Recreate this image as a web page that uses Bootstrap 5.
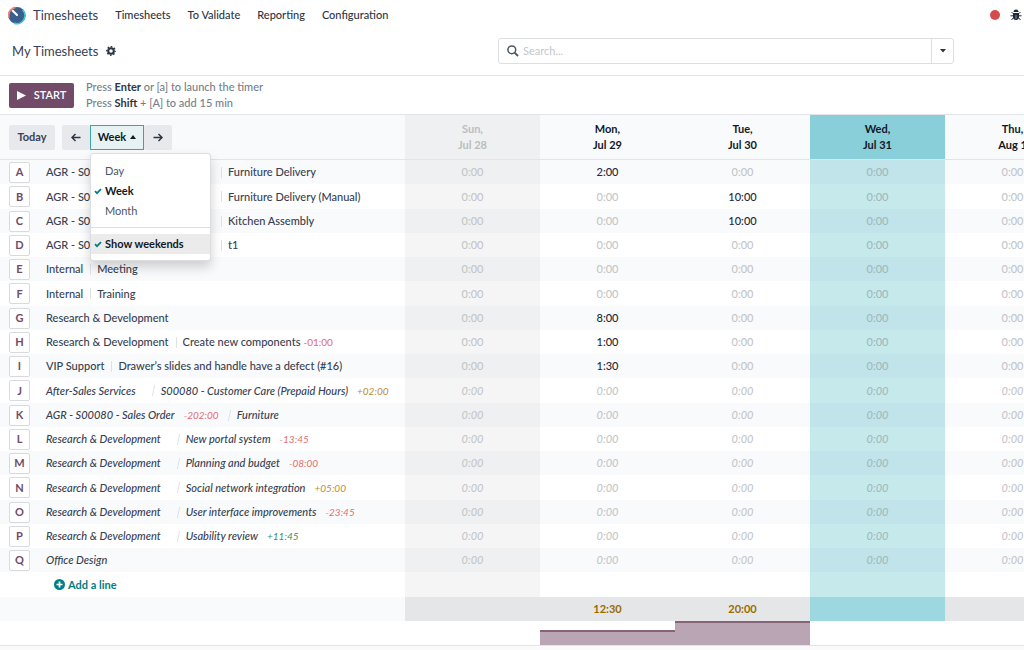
<!DOCTYPE html>
<html lang="en">
<head>
<meta charset="utf-8">
<meta name="viewport" content="width=device-width, initial-scale=1">
<title>My Timesheets</title>
<link href="https://cdn.jsdelivr.net/npm/bootstrap@5.3.0/dist/css/bootstrap.min.css" rel="stylesheet">
<script src="https://cdn.jsdelivr.net/npm/bootstrap@5.3.0/dist/js/bootstrap.bundle.min.js" defer></script>
<style>
  :root { --plum: #714b67; --teal: #017e84; --ink: #374151; --rule: #e3e4e6; --font: Lato, "Noto Sans", sans-serif; }
  body { font: 500 11px/16px var(--font); color: var(--ink); background: #fafafa; }
  .app { background: #fff; border-bottom: 1px solid var(--rule); }
  .topnav { height: 30px; gap: 17px; }
  .topnav a { color: #2b3545; text-decoration: none; }
  .topnav .brand, .crumb { font-size: 13px; font-weight: 400; line-height: 20px; color: var(--ink); }
  .topnav .brand { gap: 7px; }
  .controls { height: 46px; border-bottom: 1px solid var(--rule); padding: 0 70px 3px 12px; }
  .search { width: 456px; height: 26px; border: 1px solid #dcdee1; border-radius: 3px; }
  .search input { font-size: 11px; border: 0; outline: 0; background: transparent; color: var(--ink); }
  .search input::placeholder { color: #c3c7cc; opacity: 1; }
  .search button { width: 22px; border: 0; border-left: 1px solid #dcdee1; background: transparent; }
  .timerbar { height: 39px; padding-left: 9px; gap: 12px; border-bottom: 1px solid var(--rule); color: #75808c; }
  .timerbar b { color: #2b3545; }
  .btn-start { width: 65px; height: 25px; border-radius: 2px; background: var(--plum); color: #fff; font-size: 11px; font-weight: 600; line-height: 16px; }
  .btn-start:hover { background: var(--plum); color: #fff; }
  .scale-tools { padding-left: 9px; gap: 7px; }
  .btn-soft { height: 25px; background: #e7e9ed; color: var(--ink); font-size: 11px; line-height: 16px; font-weight: 700; border-radius: 2px; border: 0; padding: 0; width: 46px; }
  .btn-arrow { width: 28px; }
  .btn-scale { height: 25px; background: #e6f2f3; border: 1px solid #3aa5a8; border-radius: 0; color: #111827; font-size: 11px; font-weight: 700; line-height: 16px; width: 54px; padding: 0; }
  .scale-menu { top: 28px; left: 0; width: 121px; min-width: 0; padding: 7px 0 6px; border: 1px solid #dcdee1; border-radius: 3px; font-size: 11px; box-shadow: 0 6px 12px rgba(0,0,0,.18); }
  .scale-menu .dropdown-item { position: relative; padding: 2px 0 2px 14px; line-height: 16px; color: #4b5563; }
  .scale-menu .active { background: transparent; color: #111827; font-weight: 700; }
  .scale-menu .hot { background: #ebebeb; }
  .scale-menu svg { position: absolute; left: 3px; top: 7px; }
  .scale-menu .dropdown-divider { margin: 6px 0; border-color: #dcdee1; }

  .sheet-wrap { overflow: hidden; }
  .sheet-inner { min-width: 1080px; }
  .sheet { width: 100%; table-layout: fixed; border-collapse: separate; border-spacing: 0; }
  .sheet .lines { width: 37.5%; }
  .sheet th, .sheet td { padding: 0; text-align: center; vertical-align: middle; }
  .sheet thead th { height: 45px; background: #f9fafb; border-bottom: 1px solid var(--rule); color: #111827; font-weight: 700; }
  .sheet tbody tr { height: 24px; }
  .sheet tbody tr:nth-child(4n+2) { height: 25px; }
  .sheet tbody tr:nth-child(odd) > * { background: #f9fafb; }
  .sheet tbody td { color: #c3c6c9; }
  .sheet tbody td.spent { color: #1f2937; }
  .sheet tbody tr > :nth-child(2) { background: #f5f5f6; }
  .sheet tr:nth-child(odd) > :nth-child(2) { background: #eff0f1; }
  .sheet thead th:nth-child(2) { color: #babdc0; }
  .sheet tbody tr > :nth-child(5) { background: #c6e9ec; color: #9fb9bd; }
  .sheet tbody tr:nth-child(odd) > :nth-child(5) { background: #c0e4e9; }
  .sheet thead tr > th:nth-child(5) { background: #89cfd9; }
  .sheet tbody th { text-align: left; font-weight: 500; white-space: nowrap; }
  .sheet .planned { font-style: italic; }
  .sheet tbody tr.totals > td:nth-child(n) { background: #e5e6e8; color: #9a6b01; font-weight: 700; }
  .sheet tbody tr.totals > td:nth-child(5) { background: #9dd7df; }
  .line { padding-left: 9px; }
  .key { width: 21px; height: 21px; margin-right: 16px; padding: 0; border: 1px solid #d8dadd; border-radius: 2px; background: #fff; color: var(--plum); font-size: 11px; font-weight: 700; line-height: 16px; }
  .project-col { width: 168px; }
  .task { margin-left: 7px; padding-left: 7px; background: linear-gradient(#dfe1e4, #dfe1e4) no-repeat 0 50% / 1px 11px; }
  .slant { display: inline-block; width: 1px; height: 11px; background: #dfe1e4; transform: skewX(-12deg); margin: 0 7px 0 17px; }
  .over { font-size: 10px; font-weight: 400; margin-left: 3px; color: #e46d6d; }
  .planned .over { margin-left: 9px; }
  .planned .over + .slant { margin-left: 10px; }
  .over.warn { color: #c08a3a; }
  .over.good { color: #3c8f6a; }
  .add-line { color: var(--teal); font-weight: 700; text-decoration: none; padding-left: 54px; gap: 3px; }
  .bars { height: 24px; padding-left: 50%; }
  .bars div { width: 25%; background: #b9a5b3; border-top: 2px solid #866378; }
</style>
</head>
<body>
<div class="app">
  <nav class="topnav d-flex align-items-center ps-2">
    <a class="brand d-flex align-items-center" href="#"><svg width="18" height="19" viewBox="0 0 19 19" aria-hidden="true"><circle cx="9.500" cy="9.500" r="9" fill="#3a5f8c"/><path d="M4 2.500A9 9 0 0 0 1 12" fill="none" stroke="#f0837c" stroke-width="2"/><path d="M4 2.500 7.500 1" stroke="#f0837c" stroke-width="2"/><path d="M15.500 3.500A8.600 8.600 0 0 1 6.500 17.600" fill="none" stroke="#45c4e0" stroke-width="1.800"/><path d="M5 4.500 9.500 9" stroke="#fff" stroke-width="2.200" stroke-linecap="round"/></svg>Timesheets</a>
    <a href="#">Timesheets</a>
    <a href="#">To Validate</a>
    <a href="#">Reporting</a>
    <a href="#">Configuration</a>
    <span class="ms-auto d-flex align-items-center gap-2 pe-1">
      <svg width="12" height="12" viewBox="0 0 12 12"><circle cx="7" cy="6" r="5" fill="#d44c4c"/></svg>
      <svg width="12" height="12" viewBox="-2 0 12 12" fill="#1f2937" stroke="#1f2937" overflow="visible"><path d="M3.500 3a2.500 2.500 0 0 1 5 0z" stroke="none"/><path d="M3 4h6v4a3 3 0 0 1-6 0z" stroke="none"/><path d="M3 4.500 1.500 3M9 4.500 10.500 3M3 6.800H.5M9 6.800h2.500M3.200 9 1.500 11M8.800 9l1.700 2"/><path d="M6 6v4" stroke="#fff" stroke-width=".5"/></svg>
    </span>
  </nav>

  <div class="controls d-flex align-items-center justify-content-between">
    <div class="crumb d-flex align-items-center gap-2">My Timesheets
      <svg width="10" height="10" viewBox="1 1 10 10" fill="none" stroke="#2b3545"><circle cx="6" cy="6" r="2.800" stroke-width="2"/><circle cx="6" cy="6" r="4.200" stroke-width="1.400" stroke-dasharray="1.650 1.649" stroke-dashoffset=".8"/></svg>
    </div>
    <div class="search d-flex align-items-stretch" role="search">
      <label for="q" class="d-flex align-items-center ps-2 pe-1"><svg width="12" height="12" viewBox="0 0 12 12" fill="none" stroke="#4b5565" stroke-width="1.500"><circle cx="4.800" cy="4.800" r="3.900"/><path d="M7.600 7.600 11 11" stroke-width="1.800"/></svg></label>
      <input id="q" class="flex-grow-1 p-0" type="text" placeholder="Search..." aria-label="Search">
      <button class="d-flex align-items-center justify-content-center p-0" aria-label="Search options"><svg width="6" height="4" viewBox="0 0 6 4"><path d="M0 0h6L3 3.500z" fill="#2b3545"/></svg></button>
    </div>
  </div>

  <div class="timerbar d-flex align-items-center">
    <button class="btn btn-start d-flex align-items-center justify-content-center gap-2 border-0 p-0"><svg width="9" height="9" viewBox="0 0 9 9"><path d="M0 0l9 4.500L0 9z" fill="#fff"/></svg>START</button>
    <div>Press <b>Enter</b> or [a] to launch the timer<br>Press <b>Shift</b> + [A] to add 15 min</div>
  </div>

  <div class="sheet-wrap">
  <div class="sheet-inner">
  <table class="sheet">
    <thead>
      <tr>
        <th class="lines" scope="col">
          <div class="scale-tools d-flex align-items-center">
            <button class="btn btn-soft">Today</button>
            <div class="d-flex">
              <button class="btn btn-soft btn-arrow d-flex align-items-center justify-content-center" aria-label="Previous"><svg width="10" height="9" viewBox="0 0 10 9" fill="none" stroke="#2b3545" stroke-width="1.500"><path d="M9.500 4.500H1M4.500 1 1 4.500 4.500 8"/></svg></button>
              <div class="dropdown">
                <button class="btn btn-scale d-flex align-items-center justify-content-center gap-1">Week <svg width="6" height="4" viewBox="0 0 6 4"><path d="M0 4h6L3 0z" fill="#111827"/></svg></button>
                <div class="dropdown-menu scale-menu show">
                  <a class="dropdown-item" href="#">Day</a>
                  <a class="dropdown-item active" href="#"><svg width="8" height="7" viewBox="0 0 8 7"><path d="M1 3.200 3 5.200 7 1.200" fill="none" stroke="#017e84" stroke-width="1.700"/></svg>Week</a>
                  <a class="dropdown-item" href="#">Month</a>
                  <div class="dropdown-divider"></div>
                  <a class="dropdown-item active hot" href="#"><svg width="8" height="7" viewBox="0 0 8 7"><path d="M1 3.200 3 5.200 7 1.200" fill="none" stroke="#017e84" stroke-width="1.700"/></svg>Show weekends</a>
                </div>
              </div>
              <button class="btn btn-soft btn-arrow d-flex align-items-center justify-content-center" aria-label="Next"><svg width="10" height="9" viewBox="0 0 10 9" fill="none" stroke="#2b3545" stroke-width="1.500"><path d="M.5 4.500H9M5.500 1 9 4.500 5.500 8"/></svg></button>
            </div>
          </div>
        </th>
        <th scope="col">Sun,<br>Jul 28</th><th scope="col">Mon,<br>Jul 29</th><th scope="col">Tue,<br>Jul 30</th><th scope="col">Wed,<br>Jul 31</th><th scope="col">Thu,<br>Aug 1</th>
      </tr>
    </thead>
    <tbody>
      <tr><th scope="row"><div class="line d-flex align-items-center"><button class="key">A</button><span class="project-col">AGR - S00</span><span class="task">Furniture Delivery</span></div></th><td>0:00</td><td class="spent">2:00</td><td>0:00</td><td>0:00</td><td>0:00</td></tr>
      <tr><th scope="row"><div class="line d-flex align-items-center"><button class="key">B</button><span class="project-col">AGR - S00</span><span class="task">Furniture Delivery (Manual)</span></div></th><td>0:00</td><td>0:00</td><td class="spent">10:00</td><td>0:00</td><td>0:00</td></tr>
      <tr><th scope="row"><div class="line d-flex align-items-center"><button class="key">C</button><span class="project-col">AGR - S00</span><span class="task">Kitchen Assembly</span></div></th><td>0:00</td><td>0:00</td><td class="spent">10:00</td><td>0:00</td><td>0:00</td></tr>
      <tr><th scope="row"><div class="line d-flex align-items-center"><button class="key">D</button><span class="project-col">AGR - S00</span><span class="task">t1</span></div></th><td>0:00</td><td>0:00</td><td>0:00</td><td>0:00</td><td>0:00</td></tr>
      <tr><th scope="row"><div class="line d-flex align-items-center"><button class="key">E</button>Internal<span class="task">Meeting</span></div></th><td>0:00</td><td>0:00</td><td>0:00</td><td>0:00</td><td>0:00</td></tr>
      <tr><th scope="row"><div class="line d-flex align-items-center"><button class="key">F</button>Internal<span class="task">Training</span></div></th><td>0:00</td><td>0:00</td><td>0:00</td><td>0:00</td><td>0:00</td></tr>
      <tr><th scope="row"><div class="line d-flex align-items-center"><button class="key">G</button>Research &amp; Development</div></th><td>0:00</td><td class="spent">8:00</td><td>0:00</td><td>0:00</td><td>0:00</td></tr>
      <tr><th scope="row"><div class="line d-flex align-items-center"><button class="key">H</button>Research &amp; Development<span class="task">Create new components</span><span class="over">-01:00</span></div></th><td>0:00</td><td class="spent">1:00</td><td>0:00</td><td>0:00</td><td>0:00</td></tr>
      <tr><th scope="row"><div class="line d-flex align-items-center"><button class="key">I</button>VIP Support<span class="task">Drawer’s slides and handle have a defect (#16)</span></div></th><td>0:00</td><td class="spent">1:30</td><td>0:00</td><td>0:00</td><td>0:00</td></tr>
      <tr class="planned"><th scope="row"><div class="line d-flex align-items-center"><button class="key">J</button>After-Sales Services<i class="slant"></i>S00080 - Customer Care (Prepaid Hours)<span class="over warn">+02:00</span></div></th><td>0:00</td><td>0:00</td><td>0:00</td><td>0:00</td><td>0:00</td></tr>
      <tr class="planned"><th scope="row"><div class="line d-flex align-items-center"><button class="key">K</button>AGR - S00080 - Sales Order<span class="over">-202:00</span><i class="slant"></i>Furniture</div></th><td>0:00</td><td>0:00</td><td>0:00</td><td>0:00</td><td>0:00</td></tr>
      <tr class="planned"><th scope="row"><div class="line d-flex align-items-center"><button class="key">L</button>Research &amp; Development<i class="slant"></i>New portal system<span class="over">-13:45</span></div></th><td>0:00</td><td>0:00</td><td>0:00</td><td>0:00</td><td>0:00</td></tr>
      <tr class="planned"><th scope="row"><div class="line d-flex align-items-center"><button class="key">M</button>Research &amp; Development<i class="slant"></i>Planning and budget<span class="over">-08:00</span></div></th><td>0:00</td><td>0:00</td><td>0:00</td><td>0:00</td><td>0:00</td></tr>
      <tr class="planned"><th scope="row"><div class="line d-flex align-items-center"><button class="key">N</button>Research &amp; Development<i class="slant"></i>Social network integration<span class="over warn">+05:00</span></div></th><td>0:00</td><td>0:00</td><td>0:00</td><td>0:00</td><td>0:00</td></tr>
      <tr class="planned"><th scope="row"><div class="line d-flex align-items-center"><button class="key">O</button>Research &amp; Development<i class="slant"></i>User interface improvements<span class="over">-23:45</span></div></th><td>0:00</td><td>0:00</td><td>0:00</td><td>0:00</td><td>0:00</td></tr>
      <tr class="planned"><th scope="row"><div class="line d-flex align-items-center"><button class="key">P</button>Research &amp; Development<i class="slant"></i>Usability review<span class="over good">+11:45</span></div></th><td>0:00</td><td>0:00</td><td>0:00</td><td>0:00</td><td>0:00</td></tr>
      <tr class="planned"><th scope="row"><div class="line d-flex align-items-center"><button class="key">Q</button>Office Design</div></th><td>0:00</td><td>0:00</td><td>0:00</td><td>0:00</td><td>0:00</td></tr>
      <tr><th scope="row"><a class="add-line d-flex align-items-center" href="#"><svg width="11" height="11" viewBox="0 0 11 11"><circle cx="5.500" cy="5.500" r="5.500" fill="#017e84"/><path d="M5.500 2.500v6M2.500 5.500h6" stroke="#fff" stroke-width="1.700"/></svg>Add a line</a></th><td></td><td></td><td></td><td></td><td></td></tr>
      <tr class="totals"><th></th><td></td><td>12:30</td><td>20:00</td><td></td><td></td></tr>
    </tbody>
  </table>
  <div class="bars d-flex align-items-end">
    <div style="height: 15px"></div>
    <div style="height: 24px"></div>
  </div>
  </div>
  </div>
</div>
</body>
</html>
